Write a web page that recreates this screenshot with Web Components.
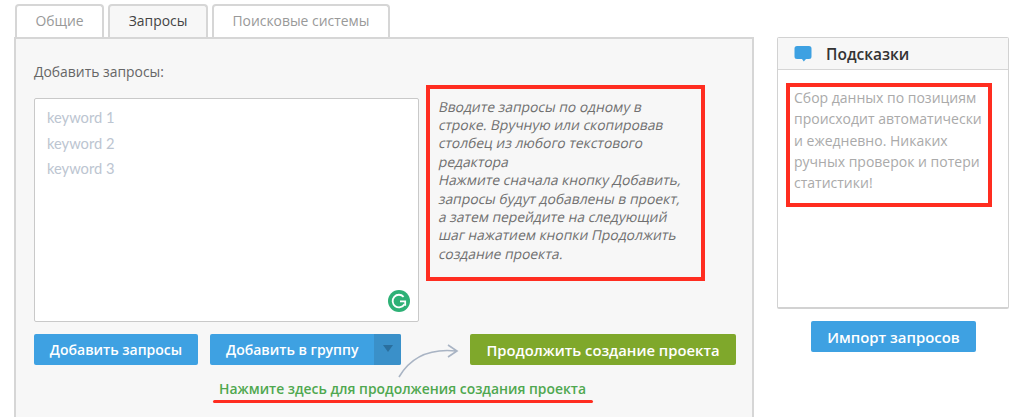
<!DOCTYPE html>
<html lang="ru">
<head>
<meta charset="utf-8">
<title>Запросы</title>
<style>
  html, body { margin: 0; height: 417px; overflow: hidden; background: #fff; }
  body { font-family: "Open Sans", "Noto Sans", sans-serif; }
</style>
</head>
<body>
<project-page></project-page>

<script>
window.customElements.define('tab-item', class extends HTMLElement {
  constructor() {
    super()
    this.attachShadow({ mode: 'open' }).innerHTML = `
      <style>
        :host {
          display: block; box-sizing: border-box; height: 33px; padding: 0 18.5px;
          border: 2px solid #d6d6d6; border-bottom: 0; border-radius: 4px 4px 0 0;
          background: #fff; color: #999; font-size: 13.9px; line-height: 30px;
        }
        :host([active]) { height: 35px; margin-bottom: -2px; padding: 0 19px; background: #f7f7f7; color: #444; position: relative; }
      </style>
      <slot></slot>`
  }
})

window.customElements.define('ui-button', class extends HTMLElement {
  constructor() {
    super()
    this.attachShadow({ mode: 'open' }).innerHTML = `
      <style>
        :host {
          display: flex; flex: none; box-sizing: border-box; height: 31px; align-items: center; justify-content: center;
          border-radius: 2px; background: #3ea1e2; color: #fff;
          font-size: 14px; font-weight: 600; white-space: nowrap;
        }
        :host([green]) { background: #7fa82b; }
      </style>
      <slot></slot>`
  }
})

window.customElements.define('note-box', class extends HTMLElement {
  constructor() {
    super()
    this.attachShadow({ mode: 'open' }).innerHTML = `
      <style>
        :host { display: block; box-sizing: border-box; border: 4px solid #ff2d20; }
      </style>
      <slot></slot>`
  }
})

window.customElements.define('keyword-area', class extends HTMLElement {
  constructor() {
    super()
    this.attachShadow({ mode: 'open' }).innerHTML = `
      <style>
        :host {
          display: block; position: relative; box-sizing: border-box; width: 385px; height: 224px;
          padding: 6px 12px; background: #fff; border: 1.5px solid #c9c9c9; border-radius: 2px;
          color: #bcc5d1; font: 14.7px/25.5px Lato, sans-serif;
        }
        svg { position: absolute; right: 8.5px; bottom: 9px; }
      </style>
      <slot></slot>
      <svg width="22" height="22" viewBox="0 0 22 22">
        <circle cx="11" cy="11" r="11" fill="#2eb176"/>
        <path d="M15.6 6.8A6.3 6.3 0 1 0 16.4 14.2" fill="none" stroke="#fff" stroke-width="1.8"/>
        <path d="M12 11.4h5.2v4.4" fill="none" stroke="#fff" stroke-width="1.8"/>
      </svg>`
  }
})

window.customElements.define('query-panel', class extends HTMLElement {
  constructor() {
    super()
    this.attachShadow({ mode: 'open' }).innerHTML = `
      <style>
        :host { display: block; width: 740px; }
        .tabs { display: flex; gap: 3.6px; height: 33px; padding: 4px 0 0 1px; align-items: flex-start; }
        .body {
          box-sizing: border-box; height: 380px; padding: 23px 18px 0 18px; position: relative;
          background: #f7f7f7; border: 2px solid #d6d6d6; border-bottom: 0;
        }
        .label { color: #666; font-size: 13.9px; line-height: 20px; }
        .work { display: flex; gap: 7px; margin-top: 3px; }
        .left { padding-top: 13px; }
        note-box {
          box-sizing: border-box; width: 279px; height: 196px; padding: 8.5px 7px 0;
          color: #707070; font-size: 13.85px; line-height: 18.4px; white-space: nowrap;
        }
        note-box span { display: block; transform: skewX(-12deg); transform-origin: 0 100%; }
        .row { display: flex; margin-top: 12px; }
        .b1 { width: 164px; }
        .b2 { width: 191px; margin-left: 12px; justify-content: flex-start; padding-left: 16px; position: relative; }
        .drop {
          position: absolute; right: 0; top: 0; width: 27px; height: 31px; background: #3a90c9;
          border-radius: 0 2px 2px 0; display: flex; justify-content: center; padding-top: 11px; box-sizing: border-box;
        }
        .drop i { width: 0; height: 0; border: 5px solid transparent; border-top: 7px solid #2a6f9e; border-bottom: 0; }
        .b3 { width: 266px; margin-left: 69px; font-size: 14.8px; }
        .hint { margin: 14px 0 0 185px; height: 20px; color: #4fa84f; font-size: 13.9px; font-weight: 600; line-height: 20px; white-space: nowrap; }
        .arrow { position: absolute; left: 382px; top: 297px; }
        .line { position: absolute; left: 197px; top: 361px; width: 380px; height: 3px; border-radius: 2px; background: #ff2d20; }
      </style>
      <div class="tabs">
        <tab-item>Общие</tab-item>
        <tab-item active>Запросы</tab-item>
        <tab-item>Поисковые системы</tab-item>
      </div>
      <div class="body">
        <div class="label">Добавить запросы:</div>
        <div class="work">
          <div class="left">
            <keyword-area>keyword 1<br>keyword 2<br>keyword 3</keyword-area>
          </div>
          <note-box>
            <span>Вводите запросы по одному в</span>
            <span>строке. Вручную или скопировав</span>
            <span>столбец из любого текстового</span>
            <span>редактора</span>
            <span>Нажмите сначала кнопку Добавить,</span>
            <span>запросы будут добавлены в проект,</span>
            <span>а затем перейдите на следующий</span>
            <span>шаг нажатием кнопки Продолжить</span>
            <span>создание проекта.</span>
          </note-box>
        </div>
        <div class="row">
          <ui-button class="b1">Добавить запросы</ui-button>
          <ui-button class="b2">Добавить в группу<span class="drop"><i></i></span></ui-button>
          <ui-button class="b3" green>Продолжить создание проекта</ui-button>
        </div>
        <div class="hint">Нажмите здесь для продолжения создания проекта</div>
        <div class="line"></div>
        <svg class="arrow" width="66" height="44" viewBox="0 0 66 44">
          <path d="M1 41C11 24 28 12 58 15M50 9l9 6-9 6" fill="none" stroke="#a9b4c4" stroke-width="1.6"/>
        </svg>
      </div>`
  }
})

window.customElements.define('tips-panel', class extends HTMLElement {
  constructor() {
    super()
    this.attachShadow({ mode: 'open' }).innerHTML = `
      <style>
        :host { display: block; width: 232px; padding-top: 37px; }
        .card {
          box-sizing: border-box; height: 272px; background: #fff; border: 1px solid #d2d2d2;
          border-bottom-width: 2px; border-radius: 2px;
        }
        .head {
          display: flex; align-items: center; height: 32px; box-sizing: border-box; padding-left: 16px; gap: 14px;
          background: #f7f7f7; border-bottom: 1.5px solid #d6d6d6;
          color: #333; font-size: 15.5px; font-weight: 600;
        }
        note-box {
          width: 206px; height: 124px; margin: 13px 0 0 8px; padding: 0 0 0 4px;
          color: #aaa; font-size: 14px; line-height: 21.3px; white-space: nowrap;
        }
        ui-button { width: 165px; margin: 12px 0 0 34px; font-size: 14.9px; }
      </style>
      <div class="card">
        <div class="head">
          <svg width="18" height="18" viewBox="0 0 18 18">
            <path d="M3 1h12a2.5 2.5 0 0 1 2.5 2.5v8A2.5 2.5 0 0 1 15 14h-3l-2.2 2.6L8 14H3a2.5 2.5 0 0 1-2.5-2.5v-8A2.5 2.5 0 0 1 3 1z" fill="#3ea1e2"/>
          </svg>
          <span>Подсказки</span>
        </div>
        <note-box>Сбор данных по позициям<br>происходит автоматически<br>и ежедневно. Никаких<br>ручных проверок и потери<br>статистики!</note-box>
      </div>
      <ui-button>Импорт запросов</ui-button>`
  }
})

window.customElements.define('project-page', class extends HTMLElement {
  constructor() {
    super()
    this.attachShadow({ mode: 'open' }).innerHTML = `
      <style>
        :host { display: flex; gap: 23px; padding-left: 14px; }
      </style>
      <query-panel></query-panel>
      <tips-panel></tips-panel>`
  }
})
</script>
</body>
</html>
